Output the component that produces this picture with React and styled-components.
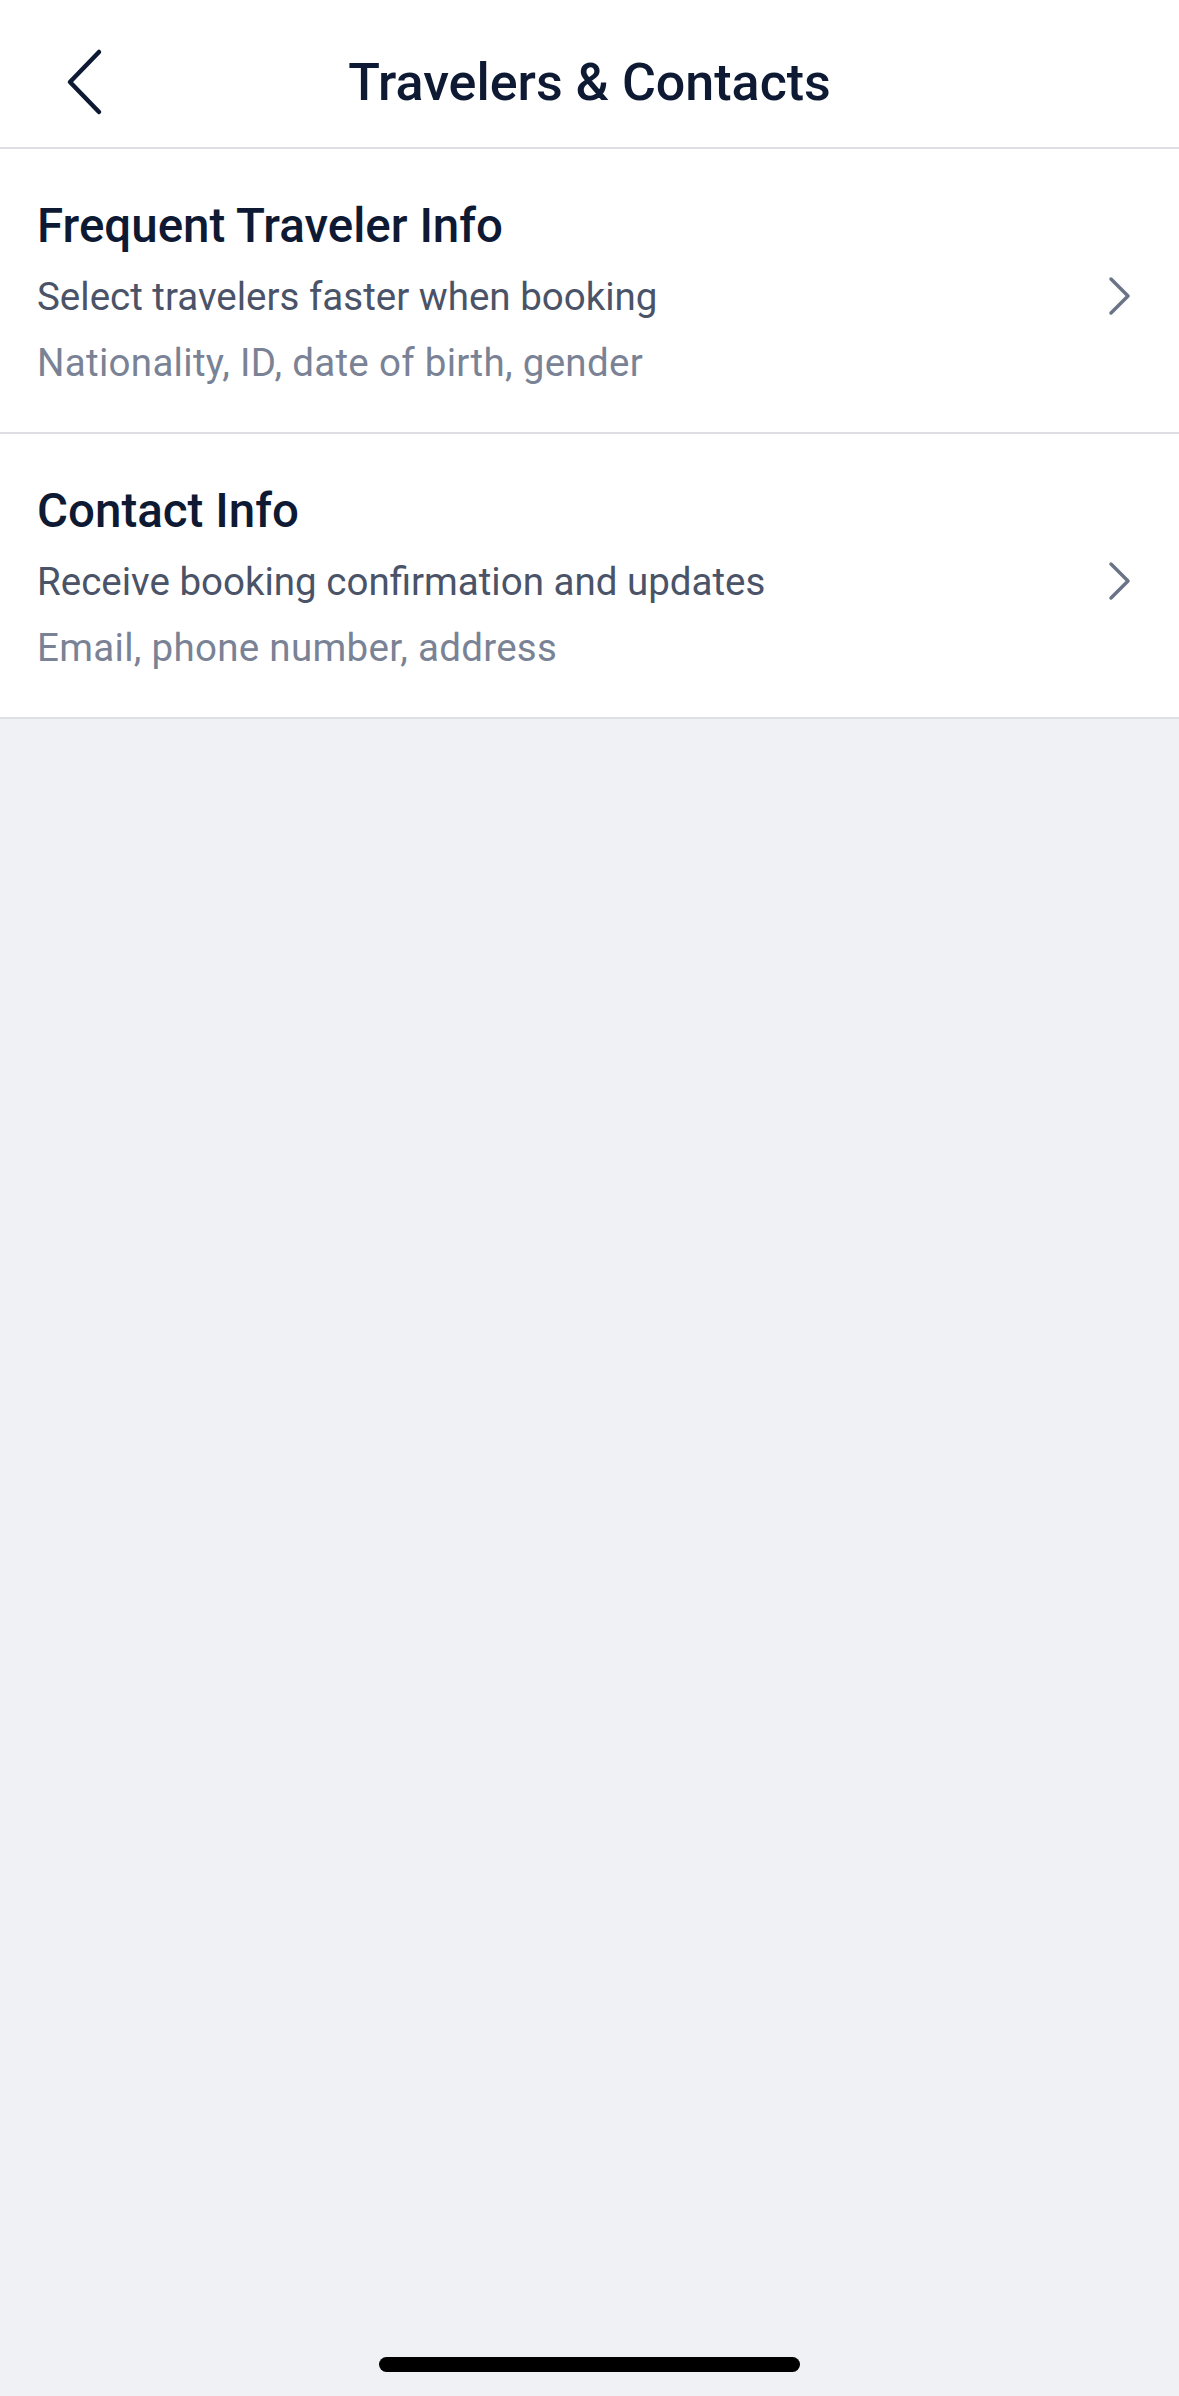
import React from "react";
import styled, { createGlobalStyle } from "styled-components";

const Global = createGlobalStyle`
  html, body { margin: 0; padding: 0; background: #f0f1f5; }
  * { box-sizing: border-box; }
  body { font-family: Roboto, "Noto Sans", "Liberation Sans", sans-serif; -webkit-font-smoothing: antialiased; }
`;

const Page = styled.div`
  min-height: 2396px;
  display: flex;
  flex-direction: column;
  background: #f0f1f5;
`;

const Header = styled.header`
  height: 149px;
  display: grid;
  grid-template-columns: 1fr auto 1fr;
  align-items: start;
  background: #ffffff;
  border-bottom: 2px solid #dedfe4;
`;

const BackButton = styled.button`
  justify-self: start;
  margin: 47px 0 0 64px;
  padding: 0;
  border: 0;
  background: transparent;
  width: 40px;
  height: 70px;
  display: flex;
`;

const Title = styled.h1`
  margin: 53px 0 0;
  font-size: 52px;
  line-height: 60px;
  font-weight: 500;
  color: #0e1a33;
  letter-spacing: 0;
  white-space: nowrap;
`;

const List = styled.div`
  display: flex;
  flex-direction: column;
  background: #ffffff;
`;

const Row = styled.div`
  display: flex;
  align-items: center;
  padding: 47px 48px 36px 37px;
  border-bottom: 2px solid #dedfe4;
  background: #ffffff;
`;

const Texts = styled.div`
  flex: 1;
  display: flex;
  flex-direction: column;
`;

const RowTitle = styled.div`
  font-size: 47.5px;
  line-height: 60px;
  font-weight: 500;
  color: #0e1a33;
  letter-spacing: 0;
  margin-bottom: 8px;
`;

const Line = styled.div`
  font-size: 38.5px;
  line-height: 66px;
  font-weight: 400;
  letter-spacing: ${(p) => (p.$muted ? "0.3px" : "0")};
  color: ${(p) => (p.$muted ? "#7a8295" : "#4a5367")};
`;

const Arrow = styled.svg`
  flex: none;
  width: 24px;
  height: 40px;
`;

const Spacer = styled.div`
  flex: 1;
`;

const HomeBar = styled.div`
  align-self: center;
  width: 421px;
  height: 15px;
  border-radius: 8px;
  background: #000;
  margin-bottom: 24px;
`;

const items = [
  {
    title: "Frequent Traveler Info",
    sub: "Select travelers faster when booking",
    note: "Nationality, ID, date of birth, gender",
  },
  {
    title: "Contact Info",
    sub: "Receive booking confirmation and updates",
    note: "Email, phone number, address",
  },
];

export default function App() {
  return (
    <Page>
      <Global />
      <Header>
        <BackButton aria-label="Back">
          <svg width="40" height="70" viewBox="0 0 40 70">
            <polyline
              points="35,5 6,35 35,65"
              fill="none"
              stroke="#0e1a33"
              strokeWidth="4.5"
              strokeLinecap="round"
              strokeLinejoin="round"
            />
          </svg>
        </BackButton>
        <Title>Travelers &amp; Contacts</Title>
        <div />
      </Header>
      <List>
        {items.map((it) => (
          <Row key={it.title}>
            <Texts>
              <RowTitle>{it.title}</RowTitle>
              <Line>{it.sub}</Line>
              <Line $muted>{it.note}</Line>
            </Texts>
            <Arrow viewBox="0 0 24 40">
              <polyline
                points="4,3 21,20 4,37"
                fill="none"
                stroke="#6b7386"
                strokeWidth="3.5"
                strokeLinecap="round"
                strokeLinejoin="round"
              />
            </Arrow>
          </Row>
        ))}
      </List>
      <Spacer />
      <HomeBar />
    </Page>
  );
}
